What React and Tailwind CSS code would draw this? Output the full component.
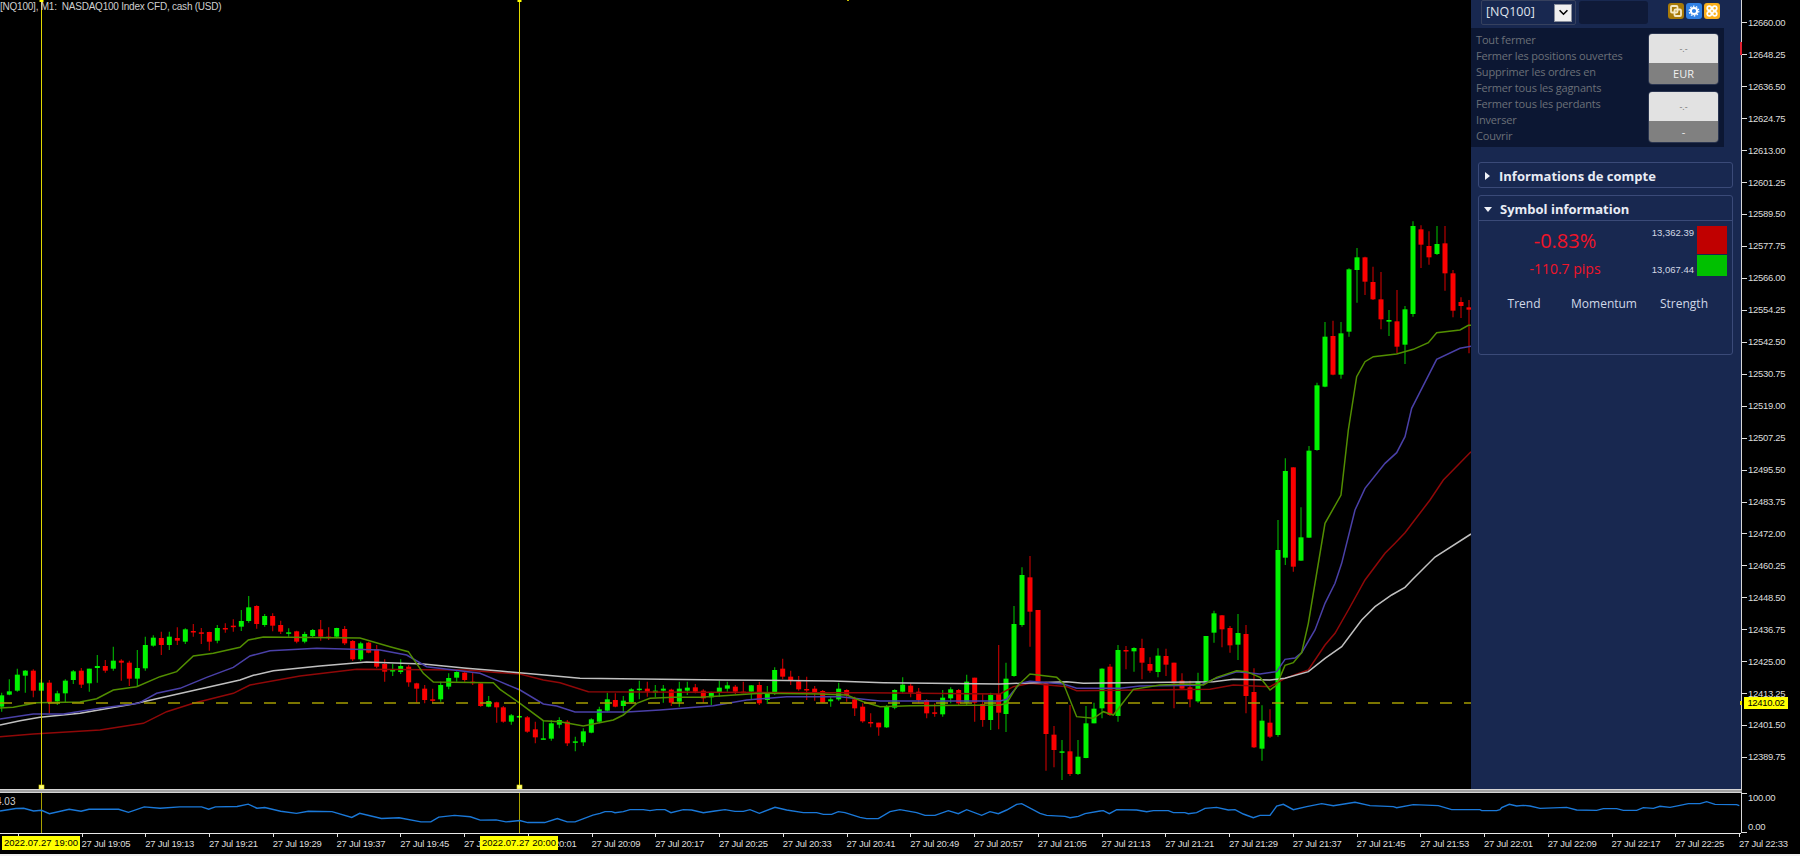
import { Fragment } from 'react'

// candle rows: [x, colour, high, bodyTop, bodyBottom, low], read off 3x crops of the chart
const at = (ox, oy, rows) =>
  rows.map(([x, c, h, t, b, l]) => ({ x: ox + x / 3, c, h: oy + h / 3, t: oy + t / 3, b: oy + b / 3, l: oy + l / 3 }))

const candles = [
  ...at(0, 590, [
    [5, 'g', 308, 316, 350, 365], [28, 'g', 268, 304, 314, 316], [52, 'g', 236, 254, 302, 305], [76, 'g', 240, 242, 257, 308],
    [100, 'r', 238, 242, 302, 322], [124, 'g', 268, 278, 302, 340], [148, 'r', 270, 278, 336, 370], [172, 'g', 302, 310, 334, 345],
    [196, 'g', 268, 272, 310, 338], [220, 'g', 240, 244, 270, 282], [244, 'r', 234, 242, 284, 294], [268, 'g', 236, 236, 280, 305],
    [292, 'g', 195, 228, 234, 278], [316, 'r', 210, 228, 242, 248], [340, 'g', 170, 212, 236, 242], [364, 'r', 208, 212, 218, 272],
    [388, 'r', 212, 218, 266, 288], [412, 'g', 180, 234, 266, 288], [436, 'g', 140, 165, 235, 242], [460, 'g', 136, 143, 167, 170],
    [484, 'r', 125, 144, 165, 195], [508, 'g', 125, 140, 165, 180], [532, 'r', 112, 144, 152, 165], [556, 'g', 115, 118, 155, 162],
    [580, 'r', 102, 123, 127, 140], [604, 'r', 114, 127, 129, 162], [628, 'r', 125, 126, 155, 182], [652, 'g', 105, 114, 152, 160],
    [676, 'r', 100, 114, 116, 128], [700, 'r', 88, 107, 109, 125], [724, 'g', 60, 93, 110, 123], [746, 'g', 18, 52, 93, 98],
    [770, 'r', 46, 48, 102, 116], [794, 'g', 72, 78, 105, 110], [818, 'r', 70, 78, 107, 124], [842, 'r', 92, 105, 125, 132],
    [866, 'g', 115, 127, 129, 140], [890, 'r', 122, 124, 155, 160], [914, 'g', 125, 132, 155, 160], [938, 'g', 117, 120, 138, 142],
    [962, 'r', 90, 118, 140, 152], [986, 'r', 112, 140, 141, 150], [1010, 'g', 113, 114, 140, 145], [1034, 'r', 108, 117, 160, 165],
    [1058, 'r', 150, 153, 208, 213], [1082, 'g', 155, 160, 208, 213], [1106, 'r', 155, 158, 188, 190], [1130, 'r', 165, 178, 230, 235],
    [1154, 'r', 208, 222, 245, 275], [1178, 'g', 222, 240, 241, 258], [1202, 'g', 208, 228, 246, 252], [1226, 'r', 225, 230, 277, 290],
    [1250, 'r', 278, 280, 296, 338], [1274, 'r', 285, 296, 330, 340], [1298, 'r', 296, 328, 330, 340], [1322, 'g', 275, 285, 328, 335],
    [1346, 'g', 250, 264, 290, 298], [1370, 'g', 244, 246, 263, 275], [1394, 'r', 246, 248, 270, 275], [1418, 'r', 248, 275, 277, 285],
    [1442, 'r', 278, 280, 348, 350], [1466, 'g', 318, 333, 350, 352], [1490, 'r', 335, 337, 352, 398],
  ]),
  ...at(500, 640, [
    [10, 'r', 198, 202, 245, 248], [34, 'g', 222, 226, 245, 254], [58, 'g', 225, 228, 232, 234], [82, 'r', 228, 232, 275, 278],
    [106, 'r', 245, 268, 292, 310], [130, 'g', 243, 295, 297, 298], [154, 'g', 240, 250, 296, 302], [178, 'g', 232, 240, 254, 265],
    [202, 'r', 240, 245, 310, 318], [226, 'g', 290, 304, 308, 334], [250, 'g', 265, 274, 307, 318], [274, 'g', 235, 238, 278, 280],
    [298, 'g', 200, 208, 245, 250], [322, 'g', 158, 178, 212, 215], [346, 'r', 160, 180, 200, 202], [370, 'g', 168, 182, 198, 220],
    [394, 'g', 145, 148, 186, 190], [418, 'g', 122, 146, 150, 178], [442, 'r', 125, 146, 155, 170], [466, 'g', 135, 152, 158, 172],
    [490, 'g', 135, 146, 152, 188], [514, 'r', 146, 149, 188, 198], [538, 'g', 125, 146, 185, 200], [562, 'g', 125, 143, 152, 165],
    [586, 'r', 132, 142, 155, 160], [610, 'r', 148, 152, 175, 188], [634, 'g', 155, 158, 172, 195], [658, 'g', 122, 143, 158, 170],
    [682, 'g', 125, 136, 146, 155], [706, 'r', 135, 140, 155, 162], [730, 'r', 125, 155, 157, 160], [754, 'g', 135, 136, 155, 180],
    [778, 'r', 125, 135, 190, 195], [802, 'g', 138, 160, 180, 192], [824, 'g', 82, 90, 160, 165], [848, 'r', 56, 86, 110, 118],
    [872, 'r', 92, 110, 122, 135], [896, 'r', 108, 124, 148, 152], [920, 'r', 110, 147, 149, 180], [944, 'r', 138, 146, 156, 182],
    [968, 'r', 150, 153, 188, 190], [992, 'g', 168, 178, 184, 200], [1016, 'g', 128, 146, 178, 182], [1040, 'r', 148, 150, 166, 185],
    [1064, 'r', 170, 178, 205, 228], [1088, 'r', 190, 200, 244, 248], [1112, 'r', 220, 246, 248, 262], [1136, 'r', 248, 248, 262, 287],
    [1160, 'g', 195, 200, 262, 264], [1184, 'g', 148, 150, 203, 208], [1208, 'g', 112, 134, 155, 160], [1232, 'r', 130, 137, 158, 172],
    [1256, 'r', 144, 155, 180, 190], [1280, 'r', 178, 180, 220, 235], [1304, 'r', 190, 217, 220, 230], [1328, 'g', 150, 173, 223, 230],
    [1352, 'g', 142, 148, 175, 190], [1376, 'r', 147, 150, 190, 195], [1400, 'g', 104, 125, 188, 195], [1424, 'r', 113, 113, 188, 245],
    [1448, 'r', 163, 192, 240, 260], [1472, 'g', 158, 165, 240, 270], [1496, 'r', 15, 162, 218, 268],
  ]),
  ...at(1000, 540, [
    [18, 'g', 368, 416, 522, 576], [42, 'g', 198, 252, 408, 410], [66, 'g', 82, 105, 255, 260], [90, 'r', 48, 112, 215, 320],
    [114, 'r', 210, 210, 425, 430], [138, 'r', 425, 430, 582, 692], [162, 'r', 558, 584, 630, 682], [186, 'g', 600, 634, 638, 720],
    [210, 'r', 495, 634, 702, 708], [234, 'g', 600, 650, 702, 705], [258, 'g', 498, 550, 654, 655], [282, 'g', 488, 506, 550, 550],
    [306, 'g', 385, 386, 505, 535], [330, 'r', 372, 380, 525, 528], [354, 'g', 315, 330, 528, 545], [378, 'r', 318, 330, 332, 388],
    [402, 'g', 322, 324, 334, 395], [426, 'r', 296, 324, 368, 418], [450, 'r', 352, 372, 392, 398], [474, 'g', 325, 347, 396, 412],
    [498, 'r', 326, 348, 374, 408], [522, 'r', 368, 368, 430, 505], [546, 'r', 400, 422, 446, 448], [570, 'r', 422, 442, 478, 502],
    [594, 'g', 398, 424, 484, 488], [618, 'g', 288, 288, 428, 432], [642, 'g', 212, 220, 278, 308], [666, 'r', 225, 226, 268, 322],
    [690, 'r', 258, 264, 316, 338], [714, 'g', 222, 279, 314, 360], [738, 'r', 255, 282, 468, 520], [762, 'r', 385, 456, 622, 624],
    [786, 'g', 496, 542, 626, 662], [810, 'r', 508, 548, 590, 594], [834, 'g', -60, 30, 585, 590],
  ]),
  ...at(1285, 430, [
    [1, 'g', 85, 123, 383, 405], [25, 'r', 112, 112, 410, 425], [48, 'g', 232, 322, 392, 392], [72, 'g', 48, 62, 323, 323],
  ]),
  ...at(1300, 200, [
    [51, 'g', 548, 556, 750, 752], [75, 'g', 366, 410, 560, 562], [99, 'r', 362, 408, 524, 526], [123, 'g', 366, 400, 524, 536],
    [147, 'g', 205, 208, 395, 410], [171, 'g', 144, 172, 210, 308], [195, 'r', 170, 172, 245, 285], [219, 'r', 200, 246, 298, 300],
    [243, 'r', 216, 298, 358, 388], [267, 'g', 330, 360, 365, 408], [291, 'r', 270, 364, 440, 460], [315, 'g', 318, 328, 434, 492],
    [339, 'g', 64, 78, 342, 350], [363, 'r', 76, 88, 134, 204], [387, 'r', 94, 138, 172, 194], [411, 'g', 78, 132, 162, 165],
    [435, 'r', 78, 130, 220, 272], [459, 'r', 210, 220, 332, 352], [483, 'r', 292, 306, 318, 354], [507, 'r', 300, 322, 329, 460],
  ]),
]

const pts = (ox, oy, flat) => {
  let s = ''
  for (let i = 0; i < flat.length; i += 2) s += `${ox + flat[i] / 3},${oy + flat[i + 1] / 3} `
  return s
}

const greenLine =
  pts(0, 590, [0, 354, 40, 352, 110, 338, 240, 336, 290, 326, 340, 300, 410, 290, 480, 260, 530, 245, 580, 198, 640, 190, 720, 172, 745, 150, 790, 141, 1080, 144, 1170, 170, 1225, 185, 1270, 250, 1300, 276, 1480, 278]) +
  pts(500, 640, [0, 148, 60, 190, 130, 242, 180, 245, 250, 258, 340, 240, 370, 225, 410, 190, 450, 175, 520, 172, 600, 172, 660, 168, 780, 160, 960, 162, 1040, 165, 1090, 185, 1140, 200, 1230, 197, 1500, 195]) +
  pts(1000, 540, [20, 490, 50, 440, 90, 402, 170, 412, 190, 430, 230, 530, 280, 535, 310, 515, 340, 525, 400, 448, 480, 435, 560, 432, 610, 435, 650, 412, 710, 392, 740, 395, 780, 412, 810, 450, 830, 435]) +
  pts(1285, 430, [0, 706, 25, 698, 50, 668, 70, 580, 120, 280, 168, 195, 190, 0]) +
  pts(1300, 200, [170, 530, 195, 485, 220, 470, 290, 462, 340, 448, 385, 428, 410, 398, 480, 390, 505, 376, 513, 376])

const purpleLine =
  pts(0, 590, [0, 387, 100, 372, 190, 372, 300, 355, 415, 340, 470, 310, 540, 295, 620, 262, 700, 232, 750, 198, 810, 182, 950, 175, 1140, 180, 1220, 195, 1280, 230, 1380, 242, 1440, 250]) +
  pts(500, 640, [0, 125, 60, 150, 130, 192, 170, 198, 225, 216, 380, 216, 480, 210, 640, 197, 740, 180, 860, 170, 1020, 170, 1140, 183, 1500, 183]) +
  pts(1000, 540, [20, 478, 60, 430, 90, 424, 190, 432, 230, 445, 360, 445, 420, 438, 600, 436, 640, 418, 710, 395, 780, 402, 830, 395]) +
  pts(1285, 430, [0, 688, 30, 684, 50, 668, 90, 600, 120, 520, 150, 460, 170, 400, 210, 240, 240, 175, 300, 100, 335, 68, 360, 20]) +
  pts(1300, 200, [335, 625, 410, 478, 480, 445, 513, 439])

const redLine =
  pts(0, 590, [0, 440, 100, 432, 300, 420, 430, 400, 500, 365, 580, 340, 700, 310, 750, 285, 900, 258, 1070, 238, 1400, 240]) +
  pts(500, 640, [0, 98, 60, 102, 130, 120, 180, 128, 265, 155, 960, 158, 1100, 158, 1500, 162]) +
  pts(1000, 540, [40, 440, 90, 430, 200, 440, 230, 452, 630, 448, 700, 435, 810, 440]) +
  pts(1285, 430, [0, 745, 70, 720, 120, 645, 150, 610, 190, 540, 240, 450, 300, 370, 330, 340, 360, 308]) +
  pts(1300, 200, [390, 900, 430, 840, 513, 755])

const whiteLine =
  pts(0, 590, [0, 405, 60, 392, 120, 382, 240, 370, 400, 342, 520, 315, 600, 297, 720, 270, 760, 256, 820, 242, 960, 228, 1100, 216, 1270, 222, 1400, 235]) +
  pts(500, 640, [0, 93, 100, 102, 240, 115, 670, 120, 1000, 123, 1150, 128, 1500, 132]) +
  pts(1000, 540, [0, 432, 200, 425, 250, 430, 640, 425, 700, 418, 810, 420]) +
  pts(1285, 430, [0, 745, 70, 725, 120, 685, 170, 650, 230, 570, 270, 530, 320, 495, 360, 472]) +
  '1412,580 1435,557 1471,534'

// blue oscillator in the lower window; first crop came back at 2.53x / 2.93x
const oscLeft = [0, 120, 40, 113, 60, 112, 85, 120, 105, 118, 125, 128, 175, 115, 205, 121, 225, 115, 300, 115, 325, 124, 365, 108, 405, 112, 455, 108, 510, 108, 528, 115, 545, 108, 600, 107, 628, 100, 650, 112, 670, 110, 710, 121, 750, 127, 780, 121, 840, 122, 890, 139, 910, 127, 965, 142, 1010, 140, 1065, 152, 1090, 152, 1110, 138, 1150, 133, 1190, 137, 1215, 147, 1255, 146, 1280, 152, 1315, 148, 1335, 154, 1378, 154, 1410, 142, 1435, 152, 1455, 152, 1500, 132]
let oscStart = ''
for (let i = 0; i < oscLeft.length; i += 2) oscStart += `${oscLeft[i] / 2.53},${770 + oscLeft[i + 1] / 2.93} `

const oscLine =
  oscStart +
  pts(600, 790, [0, 70, 15, 65, 35, 65, 45, 68, 70, 65, 90, 59, 130, 59, 150, 62, 170, 59, 195, 59, 213, 68, 250, 59, 275, 60, 310, 68, 345, 63, 375, 59, 405, 64, 430, 64, 450, 59, 478, 70, 525, 52, 560, 60, 610, 68, 650, 68, 670, 73, 695, 73, 715, 65, 735, 68, 780, 82, 800, 86, 835, 86, 870, 65, 900, 59, 950, 68, 975, 76, 1005, 76, 1045, 62, 1075, 71, 1100, 59, 1145, 76, 1170, 65, 1195, 71, 1220, 60, 1250, 43, 1265, 41, 1320, 70, 1340, 76, 1395, 79, 1410, 83, 1435, 79, 1455, 71, 1500, 63]) +
  pts(1100, 790, [10, 62, 28, 71, 50, 59, 110, 60, 140, 65, 160, 62, 205, 62, 220, 68, 255, 68, 265, 71, 290, 68, 315, 55, 350, 52, 385, 60, 405, 59, 430, 72, 460, 83, 480, 76, 510, 76, 530, 48, 550, 43, 580, 59, 620, 50, 665, 41, 700, 47, 765, 37, 810, 47, 880, 50, 890, 53, 940, 44, 1015, 47, 1055, 59, 1140, 59, 1145, 62, 1190, 62, 1200, 59]) +
  pts(1460, 650, [125, 473, 148, 463, 170, 468, 190, 466, 210, 468, 240, 475, 320, 472, 350, 480, 410, 481, 430, 476, 470, 476, 490, 481, 530, 481, 550, 473, 580, 475, 600, 469, 630, 472, 660, 466, 685, 461, 720, 461, 740, 455, 765, 463, 830, 464, 838, 467])

const priceLabels = ['12660.00', '12648.25', '12636.50', '12624.75', '12613.00', '12601.25', '12589.50', '12577.75', '12566.00', '12554.25', '12542.50', '12530.75', '12519.00', '12507.25', '12495.50', '12483.75', '12472.00', '12460.25', '12448.50', '12436.75', '12425.00', '12413.25', '12401.50', '12389.75']

const timeLabels = ['', '19:05', '19:13', '19:21', '19:29', '19:37', '19:45', '19:53', '20:01', '20:09', '20:17', '20:25', '20:33', '20:41', '20:49', '20:57', '21:05', '21:13', '21:21', '21:29', '21:37', '21:45', '21:53', '22:01', '22:09', '22:17', '22:25', '22:33']

const closeActions = ['Tout fermer', 'Fermer les positions ouvertes', 'Supprimer les ordres en', 'Fermer tous les gagnants', 'Fermer tous les perdants', 'Inverser', 'Couvrir']

function PriceChart() {
  return (
    <svg viewBox="0 0 1471 789" className="block h-full w-full">
      {candles.map((k, i) => {
        const up = k.c === 'g'
        return (
          <Fragment key={i}>
            <line x1={k.x} x2={k.x} y1={k.h} y2={k.l} stroke={up ? '#00a800' : '#b80000'} strokeWidth="1.2" />
            <rect x={k.x - 2.5} y={k.t} width="5" height={Math.max(k.b - k.t, 1.5)} fill={up ? '#00f400' : '#fa0000'} />
          </Fragment>
        )
      })}
      <polyline points={redLine} fill="none" stroke="#900808" strokeWidth="1.5" />
      <polyline points={whiteLine} fill="none" stroke="#c0c0c0" strokeWidth="1.5" />
      <polyline points={purpleLine} fill="none" stroke="#4a40a8" strokeWidth="1.5" />
      <polyline points={greenLine} fill="none" stroke="#528e00" strokeWidth="1.5" />
      <line x1="0" x2="1471" y1="703" y2="703" stroke="#a49c00" strokeWidth="1.3" strokeDasharray="12 12" />
      <line x1="41.5" x2="41.5" y1="0" y2="789" stroke="#e0d800" strokeWidth="1" />
      <line x1="519.5" x2="519.5" y1="0" y2="789" stroke="#e0d800" strokeWidth="1" />
      <rect x="39" y="785" width="5" height="4" fill="#ffff80" stroke="#e0d800" strokeWidth="0.6" />
      <rect x="517" y="785" width="5" height="4" fill="#ffff80" stroke="#e0d800" strokeWidth="0.6" />
      <rect x="39.5" y="0" width="4" height="2" fill="#ffff00" />
      <rect x="517.5" y="0" width="4" height="2" fill="#ffff00" />
      <rect x="847" y="0" width="2" height="1" fill="#c8c000" />
    </svg>
  )
}

function Oscillator() {
  return (
    <svg viewBox="0 793 1741 40" className="block h-full w-full">
      <line x1="41.5" x2="41.5" y1="793" y2="833" stroke="#a8a000" strokeWidth="1" />
      <line x1="519.5" x2="519.5" y1="793" y2="833" stroke="#a8a000" strokeWidth="1" />
      <polyline points={oscLine} fill="none" stroke="#1a78d8" strokeWidth="1.4" />
    </svg>
  )
}

function PanelIcons() {
  return (
    <div className="ml-[20px] mt-[3px] flex gap-[2px]">
      <svg viewBox="0 0 16 16" className="h-[16px] w-[16px]">
        <rect width="16" height="16" rx="3" fill="#a87a08" />
        <rect x="3" y="3" width="6.5" height="6.5" rx="1" fill="none" stroke="#f4e8c4" strokeWidth="1.8" />
        <rect x="6.5" y="6.5" width="6.5" height="6.5" rx="1" fill="none" stroke="#f4e8c4" strokeWidth="1.8" />
      </svg>
      <svg viewBox="0 0 16 16" className="h-[16px] w-[16px]">
        <rect width="16" height="16" rx="3" fill="#2f80e4" />
        <circle cx="8" cy="8" r="3.1" fill="none" stroke="#fff" strokeWidth="2" />
        <circle cx="8" cy="8" r="4.8" fill="none" stroke="#fff" strokeWidth="1.2" strokeDasharray="1.6 1.4" />
      </svg>
      <svg viewBox="0 0 16 16" className="h-[16px] w-[16px]">
        <rect width="16" height="16" rx="3" fill="#fbb01c" />
        <circle cx="5.3" cy="5.3" r="2.1" fill="none" stroke="#fff" strokeWidth="1.7" />
        <circle cx="10.7" cy="5.3" r="2.1" fill="none" stroke="#fff" strokeWidth="1.7" />
        <circle cx="5.3" cy="10.7" r="2.1" fill="none" stroke="#fff" strokeWidth="1.7" />
        <circle cx="10.7" cy="10.7" r="2.1" fill="none" stroke="#fff" strokeWidth="1.7" />
      </svg>
    </div>
  )
}

function QuoteButton({ bottom }) {
  return (
    <div className="flex h-[52px] w-[71px] flex-col overflow-hidden rounded-[4px] border border-[#2a3550]">
      <div className="flex h-[29px] items-center justify-center bg-[#e2e2e2] text-[9px] leading-none text-[#777]">-.-</div>
      <div className="flex flex-1 items-center justify-center bg-[#808080] pb-px text-[11px] leading-none text-[#f0f0f0]">{bottom}</div>
    </div>
  )
}

function SidePanel() {
  return (
    <div className="flex h-full w-[270px] shrink-0 flex-col bg-[#182850] font-['Open_Sans',sans-serif]">
      <div className="flex h-[28px] shrink-0 items-start pl-[10px]">
        <div className="flex h-[25px] w-[95px] items-center justify-between rounded-[2px] border border-[#36415e] pl-[4px] pr-[3px]">
          <span className="text-[12.5px] leading-none text-[#dfe3ec]">[NQ100]</span>
          <span className="flex h-[18px] w-[18px] items-center justify-center border border-[#8a8f9c] bg-[#f0f0f0]">
            <svg viewBox="0 0 12 8" className="h-[7px] w-[11px]">
              <path d="M1.5 1.5 6 6l4.5-4.5" fill="none" stroke="#000" strokeWidth="1.8" />
            </svg>
          </span>
        </div>
        <div className="ml-[3px] mt-px h-[23px] w-[69px] rounded-[3px] bg-[#0f1a38]" />
        <PanelIcons />
      </div>

      <div className="flex h-[119px] w-[253px] shrink-0 justify-between bg-[#0c1733] pl-[5px] pr-[5px]">
        <div className="flex flex-col pt-[4px] text-[11px] leading-[16px] tracking-[-0.17px] text-[#6b7078]">
          {closeActions.map((a) => (
            <span key={a} className="whitespace-nowrap">{a}</span>
          ))}
        </div>
        <div className="flex flex-col gap-[6px] pt-[5px]">
          <QuoteButton bottom="EUR" />
          <QuoteButton bottom="-" />
        </div>
      </div>

      <div className="mx-[7px] mt-[15px] flex h-[26px] w-[255px] shrink-0 items-center rounded-[3px] border border-[#3a4a78] pl-[6px] pt-[2px]">
        <span className="h-0 w-0 border-y-[4px] border-l-[5px] border-y-transparent border-l-[#f0f2f8]" />
        <span className="ml-[9px] text-[13px] font-bold leading-none text-[#e8ecf5]">Informations de compte</span>
      </div>

      <div className="mx-[7px] mt-[7px] flex h-[160px] w-[255px] shrink-0 flex-col rounded-[3px] border border-[#3a4a78]">
        <div className="flex h-[25px] shrink-0 items-center border-b border-[#3a4a78] pl-[5px] pt-[2px]">
          <span className="h-0 w-0 border-x-[4px] border-t-[5px] border-x-transparent border-t-[#f0f2f8]" />
          <span className="ml-[8px] text-[13px] font-bold leading-none text-[#e8ecf5]">Symbol information</span>
        </div>
        <div className="flex h-[56px] shrink-0 pt-[5px]">
          <div className="flex w-[172px] flex-col items-center pt-px text-[#f01428]">
            <span className="text-[20px] leading-[28px]">-0.83%</span>
            <span className="mt-[4px] text-[14px] leading-[20px]">-110.7 pips</span>
          </div>
          <div className="flex w-[43px] flex-col items-end justify-between pb-[1px] pt-px whitespace-nowrap font-['Liberation_Sans',sans-serif] text-[9.5px] leading-[12px] text-[#d4d8e4]">
            <span>13,362.39</span>
            <span>13,067.44</span>
          </div>
          <div className="ml-[3px] flex w-[30px] flex-col gap-px">
            <div className="h-[28px] bg-[#c00000]" />
            <div className="h-[21px] bg-[#00c000]" />
          </div>
        </div>
        <div className="ml-[5px] mt-[19px] grid w-[240px] grid-cols-3 text-center text-[12px] leading-[16px] text-[#d0d8e8]">
          <span>Trend</span>
          <span>Momentum</span>
          <span>Strength</span>
        </div>
      </div>
    </div>
  )
}

function PriceAxis() {
  return (
    <div className="relative h-full w-[59px] shrink-0 border-l border-[#d8d8d8] pt-[7px]">
      {priceLabels.map((p) => (
        <div key={p} className="flex h-[31.95px] items-center">
          <span className="h-px w-[5px] bg-[#e0e0e0]" />
          <span className="ml-px text-[9.5px] tracking-[-0.3px] text-[#dcdcdc]">{p}</span>
        </div>
      ))}
      <span className="absolute -left-[2px] top-[42px] h-[13px] w-[2px] bg-[#e02030]" />
      <span className="absolute -left-[2px] top-[701px] h-[4px] w-[2px] bg-[#e8e000]" />
      <span className="absolute left-[2px] top-[697px] flex h-[12px] w-[44px] items-center justify-center bg-[#ffff00] text-[9.5px] tracking-[-0.3px] text-black">12410.02</span>
    </div>
  )
}

export default function App() {
  return (
    <div className="flex h-[856px] w-[1800px] flex-col overflow-hidden bg-black font-['Liberation_Sans',sans-serif]">
      <div className="flex h-[789px] shrink-0">
        <div className="relative h-full w-[1471px] shrink-0 overflow-hidden">
          <PriceChart />
          <span className="absolute left-0 top-0 whitespace-pre text-[10px] leading-[13px] tracking-[-0.23px] text-[#cfcfcf]">[NQ100], M1:  NASDAQ100 Index CFD, cash (USD)</span>
        </div>
        <SidePanel />
        <PriceAxis />
      </div>

      <div className="flex h-[4px] w-[1742px] shrink-0 border-y border-[#d4d4d4] bg-[#a0a0a0]" />

      <div className="flex h-[40px] shrink-0">
        <div className="relative h-full w-[1741px] shrink-0 overflow-hidden">
          <Oscillator />
          <span className="absolute -left-[4px] top-[3px] text-[10px] leading-[12px] text-[#cfcfcf]">4.03</span>
        </div>
        <div className="flex h-full w-[59px] flex-col justify-between border-l border-[#d8d8d8]">
          <div className="flex h-[10px] items-start">
            <span className="h-px w-[5px] bg-[#e0e0e0]" />
            <span className="ml-px text-[9.5px] leading-[9px] tracking-[-0.3px] text-[#dcdcdc]">100.00</span>
          </div>
          <div className="flex h-[10px] items-end">
            <span className="h-px w-[5px] bg-[#e0e0e0]" />
            <span className="ml-px text-[9.5px] leading-[13px] tracking-[-0.3px] text-[#dcdcdc]">0.00</span>
          </div>
        </div>
      </div>

      <div className="relative flex h-[21px] w-[1800px] shrink-0 pl-[17.8px]">
        <span className="absolute left-0 top-0 h-px w-[1741px] bg-[#e8e8e8]" />
        {timeLabels.map((t, i) => (
          <div key={i} className="flex w-[63.75px] shrink-0 flex-col">
            <span className="h-[4px] w-px bg-[#e0e0e0]" />
            {t && <span className="whitespace-nowrap text-[9.5px] leading-[13px] tracking-[-0.25px] text-[#dcdcdc]">27 Jul {t}</span>}
          </div>
        ))}
        <span className="absolute left-[2px] top-[3px] flex h-[14px] w-[78px] items-center justify-center bg-[#ffff00] text-[9.5px] text-black">2022.07.27 19:00</span>
        <span className="absolute left-[480px] top-[3px] flex h-[14px] w-[78px] items-center justify-center bg-[#ffff00] text-[9.5px] text-black">2022.07.27 20:00</span>
      </div>

      <div className="h-[2px] shrink-0 bg-[#f0f0f0]" />
    </div>
  )
}
